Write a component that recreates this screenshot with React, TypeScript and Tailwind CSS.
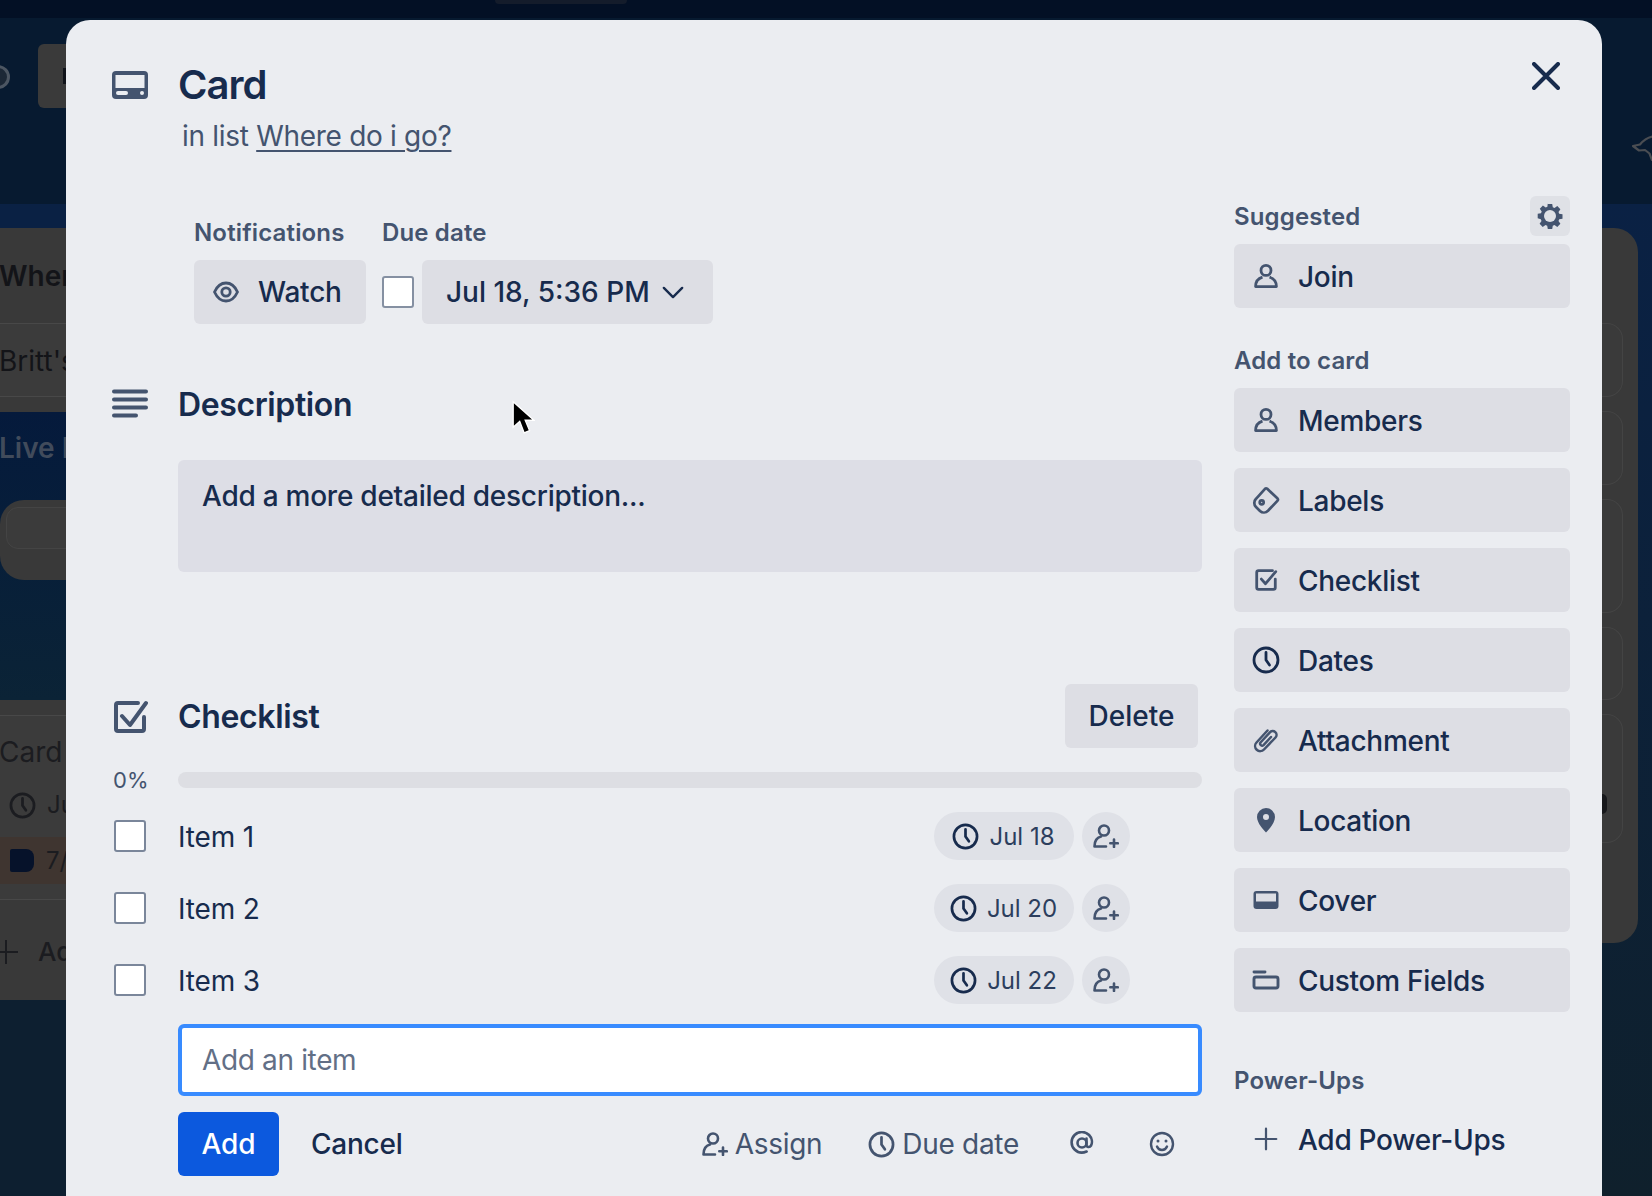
import React from "react";

const SLATE = "#44546f";
const NAVY = "#172b4d";

type IP = { className?: string; color?: string };

const Clock = ({ className = "w-7 h-7", color = NAVY }: IP) => (
  <svg viewBox="0 0 28 28" fill="none" stroke={color} strokeWidth="2.8" strokeLinecap="round" strokeLinejoin="round" className={`shrink-0 ${className}`}>
    <circle cx="14" cy="14" r="12" />
    <path d="M14 6.5V14l3.5 5" />
  </svg>
);
const Member = ({ className = "w-6 h-6" }: IP) => (
  <svg viewBox="0 0 24 24" fill="none" stroke={SLATE} strokeWidth="2.8" strokeLinejoin="round" className={className}>
    <circle cx="12" cy="6.4" r="5" />
    <path d="M8.5 13.2C4 14.5 1.6 18 1.6 22.6H22.4C22.4 18 20 14.5 15.5 13.200" />
  </svg>
);
const Label = ({ className = "w-7 h-7" }: IP) => (
  <svg viewBox="0 0 28 28" fill="none" stroke={SLATE} strokeWidth="2.7" strokeLinejoin="round" className={className}>
    <path d="M15 2.600 25.600 12.600c.6.6.6 1.400 0 2L16 24.800a5.800 5.800 0 0 1-8 .2L4 21a5.800 5.800 0 0 1 0-8.200L13 2.800c.6-.5 1.400-.6 2-.2Z" />
    <circle cx="9.700" cy="16.300" r="2" />
  </svg>
);
const CheckSmall = ({ className = "w-7 h-7" }: IP) => (
  <svg viewBox="0 0 28 28" fill="none" stroke={SLATE} strokeWidth="3" strokeLinecap="round" strokeLinejoin="round" className={className}>
    <path d="M21 4H6a2 2 0 0 0-2 2v16a2 2 0 0 0 2 2h16a2 2 0 0 0 2-2v-9" />
    <path d="m9 13 4.500 5 11-13" />
  </svg>
);
const Pin = ({ className = "w-7 h-7" }: IP) => (
  <svg viewBox="0 0 28 28" className={className}>
    <path fillRule="evenodd" fill={SLATE} d="M14 2a9 9 0 0 1 9 9c0 6-6.500 13-9 15.500C11.500 24 5 17 5 11a9 9 0 0 1 9-9Zm0 6a3 3 0 1 0 0 6 3 3 0 0 0 0-6Z" />
  </svg>
);
const Cover = ({ className = "w-7 h-7" }: IP) => (
  <svg viewBox="0 0 26 26" className={className}>
    <rect x="0.500" y="4" width="25" height="18" rx="3" fill={SLATE} />
    <rect x="3" y="6.500" width="20" height="8" fill="#dddee4" />
  </svg>
);
const Fields = ({ className = "w-7 h-7" }: IP) => (
  <svg viewBox="0 0 28 28" fill="none" stroke={SLATE} strokeWidth="2.900" strokeLinecap="round" strokeLinejoin="round" className={className}>
    <path d="M2 6h11" />
    <rect x="2" y="11" width="24" height="11" rx="2" />
  </svg>
);
const Clip = ({ className = "w-7 h-7" }: IP) => (
  <svg viewBox="0 0 28 28" fill="none" stroke={SLATE} strokeWidth="2.500" strokeLinecap="round" strokeLinejoin="round" className={className}>
    <path d="M15.500 4.500 4.500 16.500a5 5 0 0 0 7.500 7L23.500 11.500a3.800 3.800 0 0 0-5.600-5.200L8.500 16.500a2 2 0 0 0 3 2.600L19 11" />
  </svg>
);
const Plus = ({ className = "w-7 h-7" }: IP) => (
  <svg viewBox="0 0 28 28" fill="none" stroke={SLATE} strokeWidth="2.600" strokeLinecap="round" className={className}>
    <path d="M14 2v24M2 14h24" />
  </svg>
);
const Assign = ({ className = "w-[26px] h-[24px]", color = SLATE }: IP) => (
  <svg viewBox="0 0 26 24" fill="none" stroke={color} strokeWidth="2.600" strokeLinecap="round" strokeLinejoin="round" className={className}>
    <circle cx="11" cy="6.500" r="5" />
    <path d="M8 12.500C4 13.500 1.500 17.500 1.500 22.500H13" />
    <path d="M21 15.500v7.500M17.300 19.300h7.500" />
  </svg>
);
const Gear = ({ className = "w-[26px] h-[26px]" }: IP) => (
  <svg viewBox="0 0 26 26" className={className}>
    <path fill={SLATE} d="M10.800 1h4.400l.6 3.300 1.700.7 2.800-1.900 3.100 3.100-1.900 2.800.7 1.700 3.300.6v4.400l-3.300.6-.7 1.700 1.900 2.800-3.100 3.100-2.800-1.900-1.700.7-.6 3.300h-4.400l-.6-3.300-1.700-.7-2.800 1.900-3.100-3.100 1.900-2.800-.7-1.700L.7 15.200v-4.400l3.300-.6.700-1.700-1.900-2.800 3.100-3.100 2.800 1.900 1.700-.7.400-3.800Z" />
    <circle cx="13" cy="13" r="6" fill="#dfe1e6" />
  </svg>
);

const SideButton = ({ icon, label, flat }: { icon: React.ReactNode; label: string; flat?: boolean }) => (
  <div className={`h-16 rounded-md flex items-center ${flat ? "" : "bg-[#dddee4]"}`}>
    <div className="w-[64px] flex justify-center shrink-0">{icon}</div>
    <span className="text-[28px] font-medium text-[#172b4d] leading-none tracking-[-0.28px] pt-[1px]">{label}</span>
  </div>
);

const SideLabel = ({ children, className = "" }: { children: React.ReactNode; className?: string }) => (
  <div className={`text-[24px] font-semibold text-[#44546f] leading-8 tracking-[0.15px] pt-[1px] ${className}`}>{children}</div>
);

const Box = () => <div className="w-8 h-8 bg-white border-2 border-[#7a869a] rounded-[3px] shrink-0" />;

const ChecklistRow = ({ name, date }: { name: string; date: string }) => (
  <div className="h-[72px] flex items-center">
    <div className="w-[66px] pl-[2px] shrink-0"><Box /></div>
    <div className="flex-1 text-[28px] text-[#172b4d] pt-[1px] tracking-[-0.15px]">{name}</div>
    <div className="flex items-center gap-2 pr-[72px]">
      <div className="w-[140px] h-12 rounded-full bg-[#dfe1e7] flex items-center justify-center gap-[10px] pr-[1px]">
        <Clock className="w-[27px] h-[27px]" />
        <span className="text-[24px] text-[#2c3e5d] pt-[1px]">{date}</span>
      </div>
      <div className="w-12 h-12 rounded-full bg-[#dfe1e7] flex items-center justify-center">
        <Assign />
      </div>
    </div>
  </div>
);

const LeftStrip = () => (
  <div className="w-[66px] shrink-0 flex flex-col overflow-hidden whitespace-nowrap">
    <div className="h-[18px] bg-[#031025] shrink-0" />
    <div className="h-[186px] bg-[#071a30] shrink-0 flex items-start justify-between pt-[26px]">
      <div className="w-6 h-6 rounded-full border-[3px] border-[#4c5662] bg-[#1c2836] -ml-[14px] mt-[21px]" />
      <div className="w-7 h-16 rounded-l-md bg-[#3a3a3a] flex items-center justify-end">
        <div className="w-[3px] h-4 bg-[#10131a]" />
      </div>
    </div>
    <div className="h-6 bg-[#0a2144] shrink-0" />
    <div className="h-[184px] bg-[#393939] shrink-0 text-[#131418]">
      <div className="pt-7 h-[68px] text-[28px] font-semibold leading-[40px] -ml-[1px]">Where do i go?</div>
      <div className="mt-[27px] h-[74px] border-y border-[#484848] bg-[#3b3b3b] text-[28px] leading-[74px] -ml-[1px]">Britt's</div>
    </div>
    <div className="h-[288px] shrink-0 bg-linear-to-b from-[#051a3c] to-[#0b2336]">
      <div className="pt-4 h-[72px] text-[28px] font-semibold leading-[40px] text-[#414b5b] -ml-[1px]">Live List</div>
      <div className="mt-4 w-[80px] h-20 rounded-l-3xl bg-[#393939] pt-[7px] pl-[6px]">
        <div className="h-[42px] rounded-l-xl bg-[#3b3b3b] border border-[#444444]" />
      </div>
    </div>
    <div className="h-[300px] shrink-0 bg-[#393939] pt-[15px] text-[#1b1c20]">
      <div className="h-[185px] border-y border-[#484848] bg-[#3b3b3b]">
        <div className="h-[72px] text-[28px] leading-[72px] -ml-[1px]">Card</div>
        <div className="flex items-center h-[36px] -mt-[1px] pl-[9px] gap-[11px]">
          <Clock className="w-[27px] h-[27px]" color="#1b1c20" />
          <span className="text-[24px]">Jul</span>
        </div>
        <div className="mt-[14px] h-[47px] bg-[#3f3530] flex items-center pl-[10px] gap-3">
          <div className="w-6 h-[23px] rounded-l-[2px] rounded-r-lg bg-[#06122a] shrink-0" />
          <span className="text-[24px]">7/18</span>
        </div>
      </div>
      <div className="flex items-center pt-[36px] gap-[20px]">
        <svg viewBox="0 0 18 24" fill="none" stroke="#1b1c20" strokeWidth="2" className="w-[18px] h-6 shrink-0">
          <path d="M6 0v24M-10 12h28" />
        </svg>
        <span className="text-[26px] font-medium leading-8">Add a card</span>
      </div>
    </div>
    <div className="flex-1 bg-[#0d1f30]" />
  </div>
);

const RightStrip = () => (
  <div className="w-[50px] shrink-0 flex flex-col overflow-hidden">
    <div className="h-[18px] bg-[#031025] shrink-0" />
    <div className="h-[186px] bg-[#071a30] shrink-0 flex justify-end items-start pt-[117px]">
      <svg viewBox="0 0 24 26" fill="none" stroke="#4a4d52" strokeWidth="2.200" strokeLinejoin="round" className="w-6 h-[26px] -mr-[4px] shrink-0">
        <path d="M1 11l7-1.500C12 4.500 17 1.500 24 1v19l-4 5-2.500-6.500L13 15l-6 .5L1 11Z" />
      </svg>
    </div>
    <div className="flex-1 bg-linear-to-b from-[#0a2144] to-[#0f202c] pt-6">
      <div className="w-9 h-[715px] rounded-r-3xl bg-[#393939] pt-[95px] flex flex-col gap-[14px]">
        {[74, 74, 114, 73, 129].map((h, i) => (
          <div key={i} style={{ height: h }} className="w-[21px] rounded-r-2xl border-y border-r border-[#444444] bg-[#3a3a3a] flex items-start">
            {i === 4 && <div className="w-[5px] h-5 mt-[79px] rounded-r-full bg-[#17181b]" />}
          </div>
        ))}
      </div>
    </div>
  </div>
);

export default function App() {
  return (
    <div className="relative h-[1196px] w-[1652px] flex overflow-hidden [font-family:Inter,sans-serif]">
      <LeftStrip />
      <div className="w-[1536px] shrink-0 flex flex-col bg-[#071a30]">
        <div className="h-[18px] bg-[#031025] shrink-0 pl-[429px]">
          <div className="w-[132px] h-1 rounded-b-md bg-[#141c2b]" />
        </div>
        <div className="h-[2px] shrink-0" />
        {/* modal */}
        <div className="flex-1 rounded-t-3xl bg-[#ebedf1] pl-[46px] pr-8 pt-[41px] relative text-[#172b4d]">
          <div className="flex h-12 items-center">
            <div className="w-[66px] shrink-0">
              <svg viewBox="0 0 36 28" className="w-9 h-7">
                <rect width="36" height="28" rx="4" fill={SLATE} />
                <rect x="3.500" y="4" width="29" height="13" fill="#ebedf1" />
                <rect x="4" y="20" width="12" height="4" rx="2" fill="#ebedf1" />
                <circle cx="30" cy="22" r="2" fill="#ebedf1" />
              </svg>
            </div>
            <h1 className="text-[40px] font-semibold leading-none tracking-[-1px]">Card</h1>
            <svg viewBox="0 0 28 28" fill="none" stroke={NAVY} strokeWidth="4" strokeLinecap="round" className="absolute right-[42px] top-[42px] w-7 h-7">
              <path d="M2 2l24 24M26 2 2 26" />
            </svg>
          </div>
          <div className="mt-[7px] h-10 pl-[70px] text-[28px] leading-10 text-[#44546f] tracking-[-0.3px]">
            in list <span className="underline decoration-2 underline-offset-[4px]">Where do i go?</span>
          </div>

          <div className="mt-10 flex gap-8 items-start">
            {/* main */}
            <div className="w-[1090px] shrink-0">
              <div className="pt-5 pl-[82px]">
                <div className="flex text-[24px] font-semibold text-[#44546f] leading-8 tracking-[0.15px] pt-[1px] -mb-[1px]">
                  <div className="w-[188px]">Notifications</div>
                  <div>Due date</div>
                </div>
                <div className="mt-3 flex items-center">
                  <div className="w-[172px] h-16 rounded-md bg-[#dddee4] flex items-center pl-[19px] gap-[19px]">
                    <svg viewBox="0 0 26 22" fill="none" stroke={SLATE} strokeWidth="2.800" strokeLinejoin="round" className="w-[26px] h-[22px]">
                      <path d="M1.500 11C4 5.500 8 2 13 2s9 3.500 11.500 9C22 16.500 18 20 13 20S4 16.500 1.500 11Z" />
                      <circle cx="13" cy="11" r="4.200" />
                    </svg>
                    <span className="text-[28px] font-medium tracking-[-0.2px]">Watch</span>
                  </div>
                  <div className="ml-4 mr-2 w-8 h-8 bg-white border-2 border-[#8590a2] rounded-[3px]" />
                  <div className="w-[291px] h-16 rounded-md bg-[#dddee4] flex items-center pl-6 gap-3">
                    <span className="text-[28px] font-medium">Jul 18, 5:36 PM</span>
                    <svg viewBox="0 0 24 14" fill="none" stroke={NAVY} strokeWidth="2.600" strokeLinecap="round" strokeLinejoin="round" className="w-[22px] h-[13px]">
                      <path d="M2 2l10 10L22 2" />
                    </svg>
                  </div>
                </div>
              </div>

              <div className="mt-14 h-12 flex items-center">
                <div className="w-[66px] shrink-0">
                  <svg viewBox="0 0 36 30" fill="none" stroke={SLATE} strokeWidth="4" strokeLinecap="round" className="w-9 h-[30px]">
                    <path d="M2 2.500h32M2 10.500h32M2 18.500h32M2 26.500h22" />
                  </svg>
                </div>
                <h2 className="text-[32px] font-semibold tracking-[-0.38px] pt-[2px]">Description</h2>
              </div>
              <div className="mt-8 ml-[66px] h-28 rounded-md bg-[#dddee6] pl-6 pt-4 text-[28px] font-medium leading-10 tracking-[-0.25px]">
                Add a more detailed description...
              </div>

              <div className="mt-28 h-16 flex items-center pr-1">
                <div className="w-[66px] shrink-0">
                  <svg viewBox="0 0 36 34" fill="none" stroke={SLATE} strokeWidth="4" strokeLinecap="round" strokeLinejoin="round" className="w-9 h-[34px]">
                    <path d="M26 4H6a2 2 0 0 0-2 2v24a2 2 0 0 0 2 2h24a2 2 0 0 0 2-2V18" />
                    <path d="m10 17 8 9L34 4" />
                  </svg>
                </div>
                <h2 className="flex-1 text-[32px] font-semibold tracking-[-0.35px] pt-[2px]">Checklist</h2>
                <div className="w-[133px] h-16 rounded-md bg-[#dddee4] flex items-center justify-center text-[28px] font-medium">Delete</div>
              </div>

              <div className="mt-6 h-4 flex items-center">
                <div className="w-[66px] pl-[1px] text-[22px] text-[#44546f] shrink-0">0%</div>
                <div className="flex-1 h-4 rounded-full bg-[#dddee3]" />
              </div>

              <div className="mt-3">
                <ChecklistRow name="Item 1" date="Jul 18" />
                <ChecklistRow name="Item 2" date="Jul 20" />
                <ChecklistRow name="Item 3" date="Jul 22" />
              </div>

              <div className="mt-2 ml-[66px]">
                <input
                  placeholder="Add an item"
                  className="w-full h-[72px] rounded-md border-4 border-[#388bff] bg-white pl-5 text-[28px] tracking-[-0.35px] outline-none placeholder:text-[#626f86]"
                />
                <div className="mt-4 h-16 flex items-center">
                  <div className="w-[101px] h-16 rounded-md bg-[#0c59de] flex items-center justify-center text-[28px] font-medium text-white">Add</div>
                  <span className="ml-8 text-[28px] font-medium tracking-[-0.25px]">Cancel</span>
                  <div className="ml-auto flex items-center text-[28px] text-[#44546f] tracking-[-0.3px]">
                    <Assign className="w-[26px] h-6 mr-[7px]" />
                    <span>Assign</span>
                    <Clock className="w-[27px] h-[27px] ml-[46px] mr-[7px]" color={SLATE} />
                    <span>Due date</span>
                    <svg viewBox="0 0 24 26" fill="none" stroke={SLATE} strokeWidth="2.600" strokeLinecap="round" className="w-6 h-[26px] ml-[51px]">
                      <circle cx="12" cy="12" r="4.500" />
                      <path d="M16.500 7.500v6.500c0 2 3 3 4.600.5 1.500-3 .9-7.500-2-10.500-4-4-10.500-4-14.500 0s-4 10.500 0 14.500c3.200 3.200 8 3.800 12 2" />
                    </svg>
                    <svg viewBox="0 0 26 26" fill="none" stroke={SLATE} strokeWidth="2.400" strokeLinecap="round" className="w-[26px] h-[26px] ml-[55px] mr-[27px]">
                      <circle cx="13" cy="13" r="11" />
                      <path d="M8 15.500c1 2.500 3 3.500 5 3.500s4-1 5-3.500" />
                      <circle cx="9" cy="10" r="1.500" fill={SLATE} stroke="none" />
                      <circle cx="17" cy="10" r="1.500" fill={SLATE} stroke="none" />
                    </svg>
                  </div>
                </div>
              </div>
            </div>

            {/* sidebar */}
            <div className="w-[336px] shrink-0">
              <div className="h-10 flex items-center justify-between">
                <SideLabel>Suggested</SideLabel>
                <div className="w-10 h-10 rounded-md bg-[#dfe1e6] flex items-center justify-center"><Gear /></div>
              </div>
              <div className="mt-2"><SideButton icon={<Member />} label="Join" /></div>
              <SideLabel className="mt-9 h-8">Add to card</SideLabel>
              <div className="mt-3 flex flex-col gap-4">
                <SideButton icon={<Member />} label="Members" />
                <SideButton icon={<Label />} label="Labels" />
                <SideButton icon={<CheckSmall className="w-[26px] h-[26px]" />} label="Checklist" />
                <SideButton icon={<Clock />} label="Dates" />
                <SideButton icon={<Clip className="w-7 h-7" />} label="Attachment" />
                <SideButton icon={<Pin />} label="Location" />
                <SideButton icon={<Cover className="w-[26px] h-[26px]" />} label="Cover" />
                <SideButton icon={<Fields />} label="Custom Fields" />
              </div>
              <SideLabel className="mt-[52px] h-8">Power-Ups</SideLabel>
              <div className="mt-[11px]"><SideButton flat icon={<Plus className="w-6 h-6" />} label="Add Power-Ups" /></div>
            </div>
          </div>

          {/* pointer */}
          <svg viewBox="0 0 22 32" className="absolute left-[445px] top-[380px] w-6 h-[35px]">
            <path d="M2 1.500V25l6-5.500L12 30l5-2-4-9.500h8L2 1.500Z" fill="#000" stroke="#fff" strokeWidth="1.200" />
          </svg>
        </div>
      </div>
      <RightStrip />
    </div>
  );
}
